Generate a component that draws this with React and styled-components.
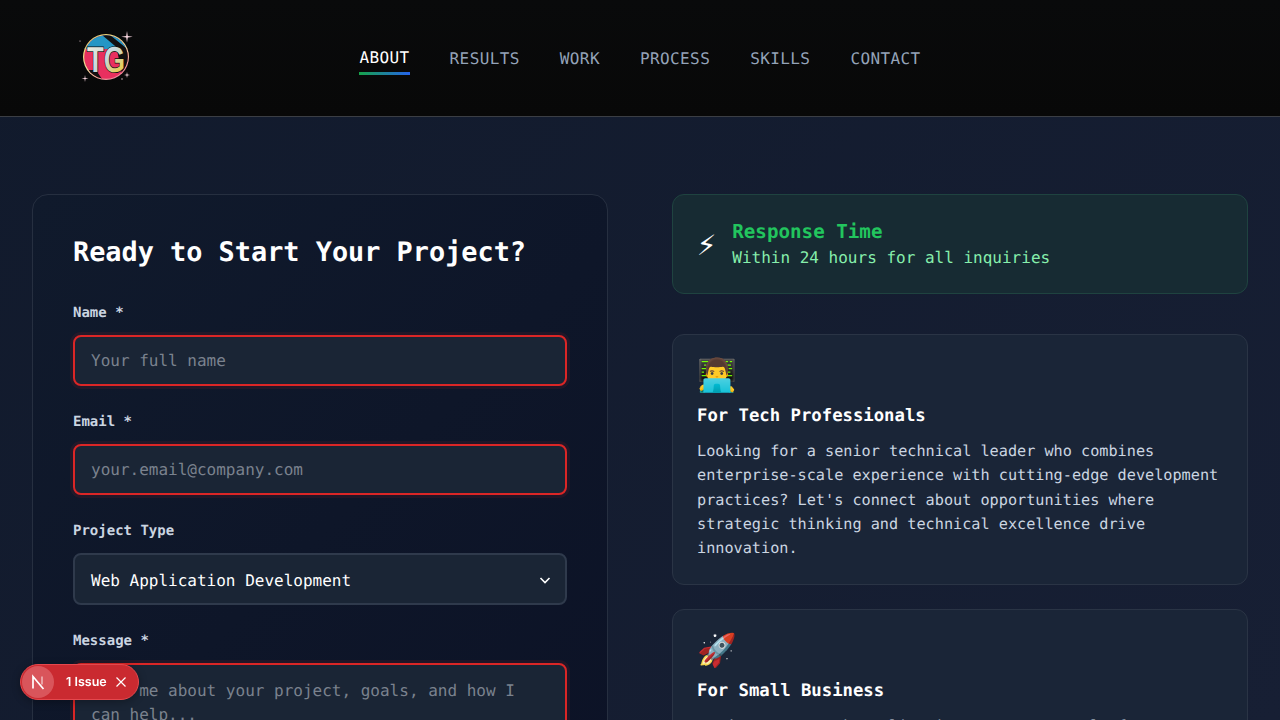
import React from 'react';
import styled, { createGlobalStyle } from 'styled-components';

const Global = createGlobalStyle`
  html { overflow: hidden; }
  body {
    margin: 0;
    background: linear-gradient(135deg, #111a2c 0%, #171f34 100%);
    background-attachment: fixed;
    color: #fff;
    font-family: "DejaVu Sans Mono", "Liberation Mono", monospace;
    text-rendering: geometricPrecision;
  }
  * { box-sizing: border-box; }
`;

const Header = styled.header`
  height: 117px;
  display: grid;
  grid-template-columns: 1fr auto 1fr;
  align-items: center;
  padding: 2px 76px 0;
  background: linear-gradient(180deg, #090a0b 0%, #080808 100%);
  border-bottom: 1px solid #3b3e44;
`;

const LogoWrap = styled.a`
  display: block;
  width: 60px;
  height: 60px;
  margin-top: -2px;
`;

const Nav = styled.nav`
  display: flex;
  gap: 40px;
`;

const NavLink = styled.a`
  position: relative;
  font-size: 16px;
  letter-spacing: 0.4px;
  line-height: 24px;
  color: ${p => (p.$active ? '#ffffff' : '#94a3b8')};
  transform: ${p => (p.$active ? 'translateY(-1px)' : 'none')};
  &::after {
    content: '';
    display: ${p => (p.$active ? 'block' : 'none')};
    position: absolute;
    left: 0;
    right: 0;
    bottom: -5px;
    height: 3px;
    background: linear-gradient(90deg, #16a34a, #2563eb);
  }
`;

const Main = styled.main`
  display: grid;
  grid-template-columns: 576px 576px;
  gap: 64px;
  padding: 77px 32px 64px;
`;

const FormCard = styled.section`
  background: linear-gradient(135deg, #101a2c 0%, #0c1226 100%);
  border: 1px solid #262f40;
  border-radius: 16px;
  padding: 40px;
`;

const Title = styled.h2`
  margin: 0 0 34px;
  font-size: 26.88px;
  line-height: 35px;
  font-weight: 700;
  color: #fff;
`;

const Field = styled.div`
  margin-bottom: 27px;
`;

const Label = styled.label`
  display: block;
  height: 23px;
  margin-bottom: 8px;
  font-size: 14px;
  line-height: 19px;
  font-weight: 700;
  color: #cbd5e1;
`;

const controlStyles = `
  display: block;
  width: 100%;
  padding: 14px 16px;
  border-radius: 8px;
  background: #1a2535;
  color: #fff;
  font-family: "DejaVu Sans Mono", "Liberation Mono", monospace;
  font-size: 16px;
  line-height: 19px;
  outline: none;
  text-rendering: geometricPrecision;
  &::placeholder { color: #7a828e; opacity: 1; }
`;

const Input = styled.input`
  ${controlStyles}
  height: 51px;
  border: 2px solid #dc2626;
  box-shadow: 0 0 0 3px rgba(220, 38, 38, 0.1);
`;

const TextArea = styled.textarea`
  ${controlStyles}
  height: 140px;
  line-height: 24px;
  padding-top: 14px;
  resize: none;
  border: 2px solid #dc2626;
  box-shadow: 0 0 0 3px rgba(220, 38, 38, 0.1);
`;

const SelectBox = styled.div`
  ${controlStyles}
  height: 52px;
  border: 2px solid #2f3a4c;
  display: flex;
  align-items: center;
  justify-content: space-between;
  padding: 15px 13px 13px 16px;
`;

const Side = styled.div`
  display: flex;
  flex-direction: column;
`;

const ResponseCard = styled.div`
  display: flex;
  align-items: center;
  gap: 16px;
  height: 100px;
  margin-bottom: 40px;
  padding: 24px;
  background: #172b33;
  border: 1px solid #1f4340;
  border-radius: 12px;
`;

const Bolt = styled.span`
  font-size: 32px;
  line-height: 1;
  color: #fff;
`;

const ResponseTitle = styled.div`
  font-size: 19.2px;
  line-height: 26px;
  font-weight: 700;
  color: #22c55e;
  margin-bottom: 1px;
`;

const ResponseText = styled.div`
  font-size: 16px;
  line-height: 24px;
  color: #86efac;
`;

const InfoCard = styled.article`
  margin-bottom: 24.4px;
  padding: 20px 24px 23px;
  background: #1a2537;
  border: 1px solid #2a3445;
  border-radius: 12px;
`;

const Emoji = styled.div`
  font-size: 32px;
  line-height: 40px;
  margin-bottom: 8px;
  font-family: "Noto Color Emoji", sans-serif;
`;

const InfoTitle = styled.h3`
  margin: 0 0 10px;
  font-size: 17.28px;
  line-height: 26px;
  font-weight: 700;
  color: #fff;
`;

const InfoText = styled.p`
  margin: 0;
  font-size: 15.2px;
  line-height: 24.32px;
  color: #cbd5e1;
`;

const IssueBadge = styled.div`
  position: fixed;
  left: 20px;
  bottom: 20px;
  height: 36px;
  width: 119px;
  display: flex;
  align-items: center;
  padding: 1px;
  border-radius: 18px;
  background: #ca2a30;
  border: 1px solid #e5484d;
  box-shadow: 0 2px 8px rgba(0, 0, 0, 0.3);
  font-family: Inter, "Liberation Sans", sans-serif;
  font-size: 12.5px;
  font-weight: 600;
  color: #fff;
`;

const IssueLogo = styled.span`
  width: 32px;
  height: 32px;
  margin-right: 12px;
  border-radius: 50%;
  background: #d9555b;
  display: flex;
  align-items: center;
  justify-content: center;
  flex: none;
`;

const IssueCount = styled.span`
  white-space: nowrap;
`;

const CloseButton = styled.span`
  display: flex;
  margin-left: 8px;
`;

const Logo = () => (
  <svg width="60" height="60" viewBox="0 0 60 60">
    <defs>
      <linearGradient id="ring" x1="0" y1="0" x2="0.6" y2="1">
        <stop offset="0" stopColor="#e8c860" />
        <stop offset="0.6" stopColor="#f6e3a0" />
        <stop offset="1" stopColor="#f08a9c" />
      </linearGradient>
      <linearGradient id="metal" x1="0" y1="0" x2="1" y2="1">
        <stop offset="0" stopColor="#f7f0d8" />
        <stop offset="0.5" stopColor="#c5d8de" />
        <stop offset="0.8" stopColor="#e8cf5a" />
        <stop offset="1" stopColor="#aab8bd" />
      </linearGradient>
      <clipPath id="disc"><circle cx="30" cy="29" r="21.800" /></clipPath>
    </defs>
    <circle cx="30" cy="29" r="23" fill="url(#ring)" />
    <g clipPath="url(#disc)">
      <rect x="6" y="6" width="48" height="48" fill="#e8305f" />
      <rect x="6" y="6" width="48" height="15" fill="#2596c4" />
      <path d="M34 7l20 16h-9L26 7zM20 42l8 12H18l-6-12zM41 22h13v18l-8 6z" fill="#111" />
    </g>
    <text x="11" y="43.500" fontFamily="'Liberation Sans', sans-serif" fontWeight="700" fontSize="36" textLength="38"
      lengthAdjust="spacingAndGlyphs" fill="url(#metal)" stroke="#0c0c0c" strokeWidth="1.400" paintOrder="stroke">TG</text>
    <g fill="#f7d6df">
      <path d="M51 3l.8 5 5 .8-5 .8-.8 5-.8-5-5-.8 5-.8z" />
      <path d="M9 47l.5 3 3 .5-3 .5-.5 3-.5-3-3-.5 3-.5z" />
      <path d="M51 44l.5 2.500 2.500.5-2.500.5-.5 2.500-.5-2.500-2.500-.5 2.500-.5z" />
      <circle cx="46" cy="51" r=".7" />
      <circle cx="4" cy="13" r=".6" />
    </g>
  </svg>
);

const NextLogo = () => (
  <svg width="16" height="16" viewBox="0 0 16 16" fill="none" stroke="#fff" strokeWidth="1.700">
    <path d="M3 14.500V2.500L13.500 15" />
    <path d="M12 2.500v8" strokeWidth="1.300" opacity=".7" />
  </svg>
);

const Close = () => (
  <svg width="12" height="12" viewBox="0 0 12 12" fill="none" stroke="#fff" strokeWidth="1.200">
    <path d="M1.500 1.500l9 9M10.500 1.500l-9 9" />
  </svg>
);

const Chevron = () => (
  <svg width="14" height="14" viewBox="0 0 14 14" fill="none" stroke="#fff" strokeWidth="1.600">
    <path d="M2.500 5l4.500 4.500L11.500 5" />
  </svg>
);

const links = ['ABOUT', 'RESULTS', 'WORK', 'PROCESS', 'SKILLS', 'CONTACT'];

export default function App() {
  return (
    <>
      <Global />
      <Header>
        <LogoWrap><Logo /></LogoWrap>
        <Nav>
          {links.map((l, i) => <NavLink key={l} $active={i === 0}>{l}</NavLink>)}
        </Nav>
      </Header>
      <Main>
        <FormCard>
          <Title>Ready to Start Your Project?</Title>
          <Field>
            <Label>Name *</Label>
            <Input placeholder="Your full name" />
          </Field>
          <Field>
            <Label>Email *</Label>
            <Input placeholder="your.email@company.com" />
          </Field>
          <Field>
            <Label>Project Type</Label>
            <SelectBox>Web Application Development<Chevron /></SelectBox>
          </Field>
          <Field>
            <Label>Message *</Label>
            <TextArea placeholder="Tell me about your project, goals, and how I can help..." />
          </Field>
        </FormCard>
        <Side>
          <ResponseCard>
            <Bolt>⚡</Bolt>
            <div>
              <ResponseTitle>Response Time</ResponseTitle>
              <ResponseText>Within 24 hours for all inquiries</ResponseText>
            </div>
          </ResponseCard>
          <InfoCard>
            <Emoji>👨‍💻</Emoji>
            <InfoTitle>For Tech Professionals</InfoTitle>
            <InfoText>Looking for a senior technical leader who combines enterprise-scale experience with cutting-edge development practices? Let's connect about opportunities where strategic thinking and technical excellence drive innovation.</InfoText>
          </InfoCard>
          <InfoCard>
            <Emoji>🚀</Emoji>
            <InfoTitle>For Small Business</InfoTitle>
            <InfoText>Need a custom web application, e-commerce platform, or digital transformation? I build solutions that grow with your business.</InfoText>
          </InfoCard>
        </Side>
      </Main>
      <IssueBadge>
        <IssueLogo><NextLogo /></IssueLogo>
        <IssueCount>1 Issue</IssueCount>
        <CloseButton><Close /></CloseButton>
      </IssueBadge>
    </>
  );
}
